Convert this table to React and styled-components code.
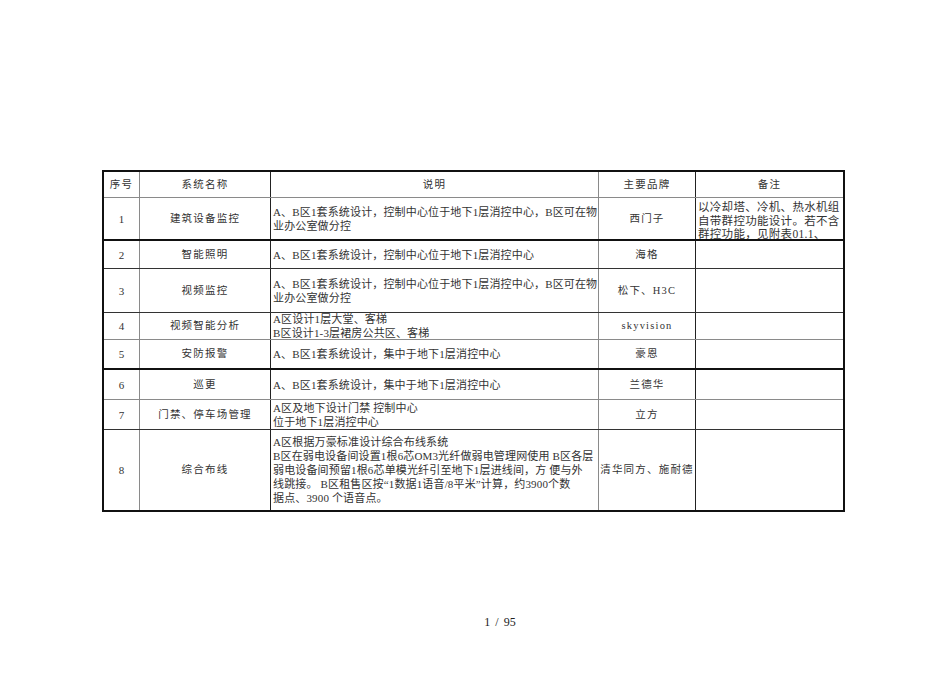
import React from "react";
import styled, { createGlobalStyle } from "styled-components";

const GlobalStyle = createGlobalStyle`
  html, body {
    margin: 0;
    padding: 0;
    background: #ffffff;
  }
  body {
    font-family: "Liberation Serif", "Noto Sans CJK SC", serif;
    color: #222;
  }
`;

const Page = styled.div`
  width: 950px;
  height: 673px;
  box-sizing: border-box;
  padding: 170px 0 0 102px;
  background: #fff;
  overflow: hidden;
`;

const Table = styled.div`
  width: 743px;
  box-sizing: border-box;
  border: 2px solid #111;
  display: flex;
  flex-direction: column;
`;

const Row = styled.div`
  display: grid;
  grid-template-columns: 36px 131px 328px 97px 1fr;
  height: ${(p) => p.h}px;
  box-sizing: border-box;
  border-bottom: ${(p) =>
    p.last ? "none" : p.heavy ? "2px solid #111" : `1px solid ${p.dark ? "#333" : "#8a8a8a"}`};
`;

const Cell = styled.div`
  box-sizing: border-box;
  border-right: ${(p) => (p.edge ? "none" : `1px solid ${p.dark ? "#222" : "#8a8a8a"}`)};
  display: flex;
  align-items: ${(p) => (p.top ? "flex-start" : "center")};
  justify-content: ${(p) => (p.left ? "flex-start" : "center")};
  padding: ${(p) => (p.left ? "0 2px" : "0")};
  overflow: hidden;
  font-size: 11px;
  line-height: 14px;
  color: #333;
`;

const Name = styled.span`
  letter-spacing: 1.2px;
  font-size: 10.5px;
  white-space: nowrap;
`;

const Text = styled.div`
  white-space: pre;
  font-size: 11px;
  line-height: 14px;
  letter-spacing: 0.15px;
`;

const Note = styled.div`
  white-space: pre;
  font-size: 11.5px;
  line-height: 13.5px;
  letter-spacing: 0.3px;
  padding-top: 3px;
`;

const Footer = styled.div`
  margin-top: 103px;
  margin-left: -102px;
  padding-left: 50px;
  text-align: center;
  font-size: 12px;
  color: #222;
  font-family: "Liberation Serif", serif;
  word-spacing: 2px;
`;

const rows = [
  {
    h: 43, heavy: true,
    no: "1", name: "建筑设备监控",
    desc: "A、B区1套系统设计，控制中心位于地下1层消控中心，B区可在物\n业办公室做分控",
    brand: "西门子",
    note: "以冷却塔、冷机、热水机组\n自带群控功能设计。若不含\n群控功能，见附表01.1、",
  },
  { h: 28, dark: true, no: "2", name: "智能照明", desc: "A、B区1套系统设计，控制中心位于地下1层消控中心", brand: "海格" },
  {
    h: 44, dark: true, no: "3", name: "视频监控",
    desc: "A、B区1套系统设计，控制中心位于地下1层消控中心，B区可在物\n业办公室做分控",
    brand: "松下、H3C",
  },
  { h: 27, no: "4", name: "视频智能分析", desc: "A区设计1层大堂、客梯\nB区设计1-3层裙房公共区、客梯", brand: "skyvision" },
  { h: 30, heavy: true, no: "5", name: "安防报警", desc: "A、B区1套系统设计，集中于地下1层消控中心", brand: "豪恩" },
  { h: 30, no: "6", name: "巡更", desc: "A、B区1套系统设计，集中于地下1层消控中心", brand: "兰德华" },
  { h: 30, dark: true, no: "7", name: "门禁、停车场管理", desc: "A区及地下设计门禁 控制中心\n位于地下1层消控中心", brand: "立方" },
  {
    h: 80, last: true, no: "8", name: "综合布线",
    desc:
      "A区根据万豪标准设计综合布线系统\nB区在弱电设备间设置1根6芯OM3光纤做弱电管理网使用 B区各层\n弱电设备间预留1根6芯单模光纤引至地下1层进线间，方 便与外\n线跳接。 B区租售区按“1数据1语音/8平米”计算，约3900个数\n据点、3900 个语音点。",
    brand: "清华同方、施耐德",
  },
];

export default function App() {
  return (
    <Page>
      <GlobalStyle />
      <Table>
        <Row h={26}>
          <Cell><Name>序号</Name></Cell>
          <Cell dark><Name>系统名称</Name></Cell>
          <Cell><Name>说明</Name></Cell>
          <Cell dark><Name>主要品牌</Name></Cell>
          <Cell edge><Name>备注</Name></Cell>
        </Row>
        {rows.map((r) => (
          <Row key={r.no} h={r.h} heavy={r.heavy} dark={r.dark} last={r.last}>
            <Cell>{r.no}</Cell>
            <Cell dark><Name>{r.name}</Name></Cell>
            <Cell left><Text>{r.desc}</Text></Cell>
            <Cell dark><Name>{r.brand}</Name></Cell>
            <Cell edge left top={!!r.note}>
              {r.note ? <Note>{r.note}</Note> : null}
            </Cell>
          </Row>
        ))}
      </Table>
      <Footer>1 / 95</Footer>
    </Page>
  );
}
